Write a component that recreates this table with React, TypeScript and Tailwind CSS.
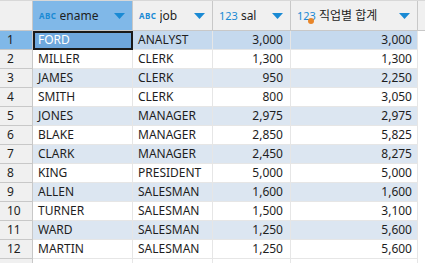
import React from "react";

type Row = { ename: string; job: string; sal: string; total: string };

const rows: Row[] = [
  { ename: "FORD", job: "ANALYST", sal: "3,000", total: "3,000" },
  { ename: "MILLER", job: "CLERK", sal: "1,300", total: "1,300" },
  { ename: "JAMES", job: "CLERK", sal: "950", total: "2,250" },
  { ename: "SMITH", job: "CLERK", sal: "800", total: "3,050" },
  { ename: "JONES", job: "MANAGER", sal: "2,975", total: "2,975" },
  { ename: "BLAKE", job: "MANAGER", sal: "2,850", total: "5,825" },
  { ename: "CLARK", job: "MANAGER", sal: "2,450", total: "8,275" },
  { ename: "KING", job: "PRESIDENT", sal: "5,000", total: "5,000" },
  { ename: "ALLEN", job: "SALESMAN", sal: "1,600", total: "1,600" },
  { ename: "TURNER", job: "SALESMAN", sal: "1,500", total: "3,100" },
  { ename: "WARD", job: "SALESMAN", sal: "1,250", total: "5,600" },
  { ename: "MARTIN", job: "SALESMAN", sal: "1,250", total: "5,600" },
];

const cols = "grid grid-cols-[33px_100px_80px_78px_127px_1fr]";

function Caret() {
  return (
    <svg width="11" height="6" viewBox="0 0 11 6" className="shrink-0">
      <path d="M0 0h11L5.5 6z" fill="#1a8ad4" />
    </svg>
  );
}

function TypeIcon({ kind }: { kind: "abc" | "num" }) {
  if (kind === "abc") {
    return (
      <span className="text-[8px] font-bold tracking-[0.5px] text-[#1a8ad4] leading-none mr-[3px]">
        ABC
      </span>
    );
  }
  return <span className="text-[11px] text-[#1a8ad4] leading-none mr-[3px]">123</span>;
}

function HeaderCell({
  kind,
  label,
  active,
  dot,
}: {
  kind: "abc" | "num";
  label: string;
  active?: boolean;
  dot?: boolean;
}) {
  return (
    <div
      className={`flex items-center pl-[6px] pr-[7px] border-r border-[#c8c8c8] ${
        active ? "bg-[#80b8e8]" : "bg-[#f0f0f0]"
      }`}
    >
      <span className="relative flex items-center">
        <TypeIcon kind={kind} />
        {dot && (
          <span className="absolute left-[11px] top-[8px] w-[6px] h-[6px] rounded-full bg-[#e8862a]" />
        )}
      </span>
      <span className="flex-1 text-[12px] text-[#1e1e1e] truncate">{label}</span>
      <Caret />
    </div>
  );
}

export default function App() {
  return (
    <div className="w-[425px] h-[263px] bg-white overflow-hidden font-['Noto_Sans','Noto_Sans_CJK_KR',sans-serif] text-[12px] text-[#1e1e1e]">
      <div className={`${cols} h-[31px] border-t border-[#d8d8d8] border-b border-b-[#c8c8c8]`}>
        <div className="bg-[#f0f0f0] border-r border-[#c8c8c8]" />
        <HeaderCell kind="abc" label="ename" active />
        <HeaderCell kind="abc" label="job" />
        <HeaderCell kind="num" label="sal" />
        <HeaderCell kind="num" label="직업별 합계" dot />
        <div className="bg-[#f0f0f0]" />
      </div>
      {rows.map((r, i) => {
        const selected = i === 0;
        const shade = selected ? "bg-[#c5d9ee]" : i % 2 === 0 ? "bg-[#dce6f1]" : "bg-white";
        return (
          <div key={i} className={`${cols} h-[19px] leading-[18px]`}>
            <div
              className={`pl-[7px] border-r border-b border-[#c8c8c8] ${
                selected ? "bg-[#80b8e8]" : "bg-[#f0f0f0]"
              }`}
            >
              {i + 1}
            </div>
            {selected ? (
              <div className="bg-[#6ea7dd] border-2 border-[#1a1a1a] pl-[3px] leading-[14px] text-white">
                {r.ename}
              </div>
            ) : (
              <div className={`${shade} pl-[5px] border-r border-b border-[#e6e6e6]`}>{r.ename}</div>
            )}
            <div className={`${shade} pl-[5px] border-r border-b border-[#e6e6e6]`}>{r.job}</div>
            <div className={`${shade} pr-[7px] text-right border-r border-b border-[#e6e6e6]`}>{r.sal}</div>
            <div className={`${shade} pr-[5px] text-right border-r border-b border-[#e6e6e6]`}>{r.total}</div>
            <div className="bg-white" />
          </div>
        );
      })}
      <div className={`${cols} h-[10px]`}>
        <div className="bg-[#f0f0f0] border-r border-[#c8c8c8]" />
        <div className="border-r border-[#e6e6e6]" />
        <div className="border-r border-[#e6e6e6]" />
        <div className="border-r border-[#e6e6e6]" />
        <div className="border-r border-[#e6e6e6]" />
        <div />
      </div>
    </div>
  );
}
